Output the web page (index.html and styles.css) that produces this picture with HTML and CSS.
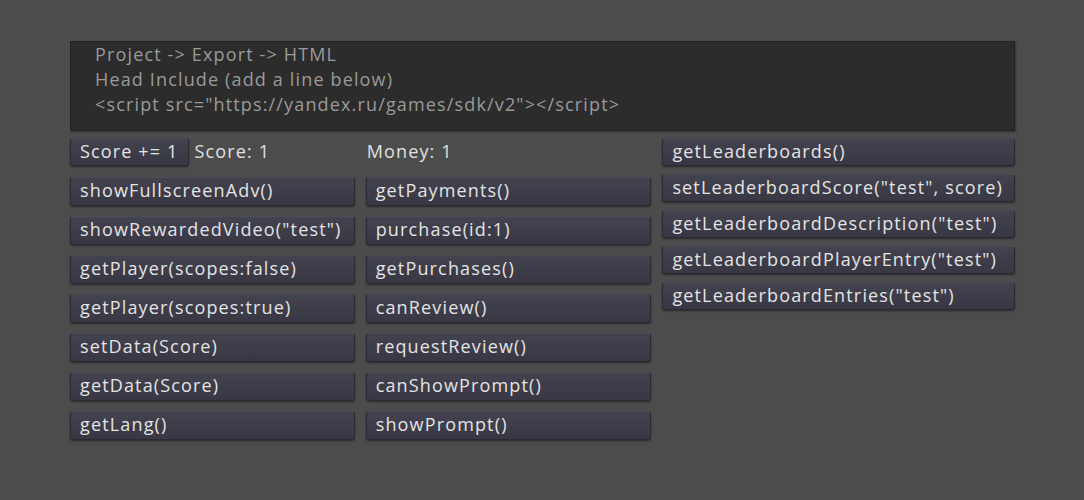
FILE: index.html
```html
<!DOCTYPE html>
<html lang="en">
<head>
  <meta charset="UTF-8">
  <title>Yandex SDK test</title>
  <link rel="stylesheet" href="styles.css">
</head>
<body>
  <div class="screen">
    <!-- instructions panel -->
    <div class="info">
      <div>Project -&gt; Export -&gt; HTML</div>
      <div>Head Include (add a line below)</div>
      <div>&lt;script src="https://yandex.ru/games/sdk/v2"&gt;&lt;/script&gt;</div>
    </div>

    <div class="cols">
      <div class="col col-main">
        <div class="top-row">
          <button class="btn btn-small">Score += 1</button>
          <span class="label">Score: 1</span>
        </div>
        <div class="list">
          <button class="btn">showFullscreenAdv()</button>
          <button class="btn">showRewardedVideo("test")</button>
          <button class="btn">getPlayer(scopes:false)</button>
          <button class="btn">getPlayer(scopes:true)</button>
          <button class="btn">setData(Score)</button>
          <button class="btn">getData(Score)</button>
          <button class="btn">getLang()</button>
        </div>
      </div>

      <div class="col col-pay">
        <div class="top-row">
          <span class="label">Money: 1</span>
        </div>
        <div class="list">
          <button class="btn">getPayments()</button>
          <button class="btn">purchase(id:1)</button>
          <button class="btn">getPurchases()</button>
          <button class="btn">canReview()</button>
          <button class="btn">requestReview()</button>
          <button class="btn">canShowPrompt()</button>
          <button class="btn">showPrompt()</button>
        </div>
      </div>

      <div class="col col-board">
        <button class="btn">getLeaderboards()</button>
        <button class="btn">setLeaderboardScore("test", score)</button>
        <button class="btn">getLeaderboardDescription("test")</button>
        <button class="btn">getLeaderboardPlayerEntry("test")</button>
        <button class="btn">getLeaderboardEntries("test")</button>
      </div>
    </div>
  </div>
</body>
</html>
```

FILE: styles.css
```css
html, body {
  margin: 0;
  height: 100%;
}
body {
  background-color: #4c4c4c;
  font-family: "Open Sans", "DejaVu Sans", sans-serif;
  font-size: 18px;
  letter-spacing: 1.15px;
  color: #e0e0e0;
  overflow: hidden;
}
.screen {
  padding: 41px 0 0 70px;
  width: 945px;
}
.info {
  box-sizing: border-box;
  height: 90px;
  background-color: #2c2c2c;
  border: 1px solid #232323;
  box-shadow: 1px 1px 2px rgba(0, 0, 0, 0.35);
  padding: 0 0 0 24px;
  color: #9a9a9a;
  line-height: 25px;
}
.cols {
  display: flex;
  gap: 11px;
  margin-top: 7px;
}
.col {
  display: flex;
  flex-direction: column;
}
.col-main {
  width: 285px;
}
.col-pay {
  width: 286px;
}
.col-board {
  width: 353px;
  gap: 8px;
}
.top-row {
  display: flex;
  align-items: center;
  height: 28px;
  gap: 6px;
  margin-bottom: 11px;
}
.col-pay .top-row {
  padding-left: 1px;
}
.list {
  display: flex;
  flex-direction: column;
  gap: 10px;
}
.label {
  line-height: 26px;
  padding-bottom: 2px;
}
.btn {
  box-sizing: border-box;
  height: 29px;
  padding: 0 0 3px 9px;
  text-align: left;
  font-family: inherit;
  font-size: 18px;
  letter-spacing: 1.15px;
  color: #e4e4e4;
  background: linear-gradient(#43424f, #383743);
  border: 1px solid #2b2a32;
  border-top-color: #4c4b58;
  border-radius: 3px;
  box-shadow: 0 1px 2px rgba(0, 0, 0, 0.45);
  white-space: nowrap;
  cursor: pointer;
}
.col-board .btn {
  height: 28px;
}
.btn-small {
  height: 28px;
  padding: 0 9px 3px;
}
```
